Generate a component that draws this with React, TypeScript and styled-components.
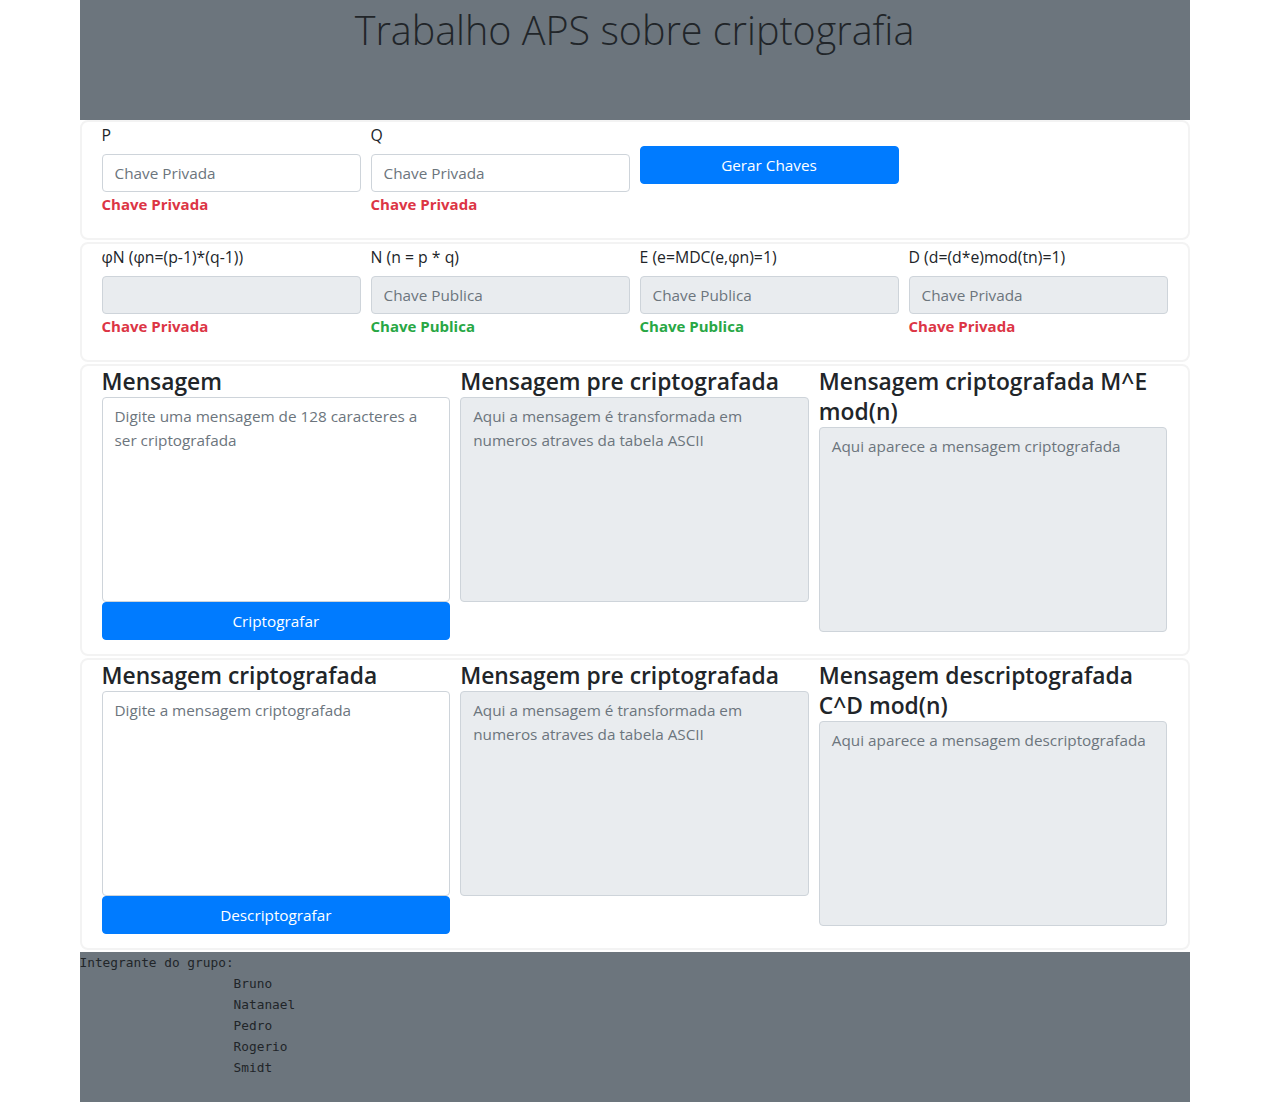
import React from "react";
import styled, { createGlobalStyle } from "styled-components";

const GlobalStyle = createGlobalStyle`
  html, body { margin: 0; padding: 0; background: #fff; }
  body {
    font-family: "Open Sans", "Noto Sans", Arial, sans-serif;
    font-size: 15.3px;
    line-height: 1.5;
    color: #212529;
  }
  * { box-sizing: border-box; }
`;

const Page = styled.div`
  width: 1110px;
  margin: 0 auto;
`;

const Header = styled.header`
  background: #6c757d;
  height: 120px;
  padding-top: 7px;
  text-align: center;
`;

const Title = styled.h1`
  margin: 0;
  font-size: 39.5px;
  font-weight: 300;
  line-height: 1.2;
  color: #212529;
`;

const Card = styled.section<{ $bottom?: number }>`
  border: 2px solid #f3f3f3;
  border-radius: 8px;
  padding: 1px 20px ${(p) => p.$bottom ?? 24}px;
  & + & { margin-top: 2px; }
`;

const Grid = styled.div<{ $cols: number }>`
  display: grid;
  grid-template-columns: repeat(${(p) => p.$cols}, 1fr);
  column-gap: 10px;
  align-items: start;
`;

const Field = styled.div`
  display: flex;
  flex-direction: column;
`;

const Label = styled.label`
  display: block;
  font-size: 15.8px;
  line-height: 24px;
  margin-bottom: 7px;
  white-space: nowrap;
`;

const Input = styled.input`
  display: block;
  width: 100%;
  height: 38px;
  padding: 6px 12px;
  font: inherit;
  color: #495057;
  background: ${(p) => (p.disabled ? "#e9ecef" : "#fff")};
  border: 1px solid #ced4da;
  border-radius: 4px;
  outline: none;
  &::placeholder { color: #6c757d; opacity: 1; }
`;

const Feedback = styled.div<{ $ok?: boolean }>`
  margin-top: 3px;
  padding-bottom: 1px;
  line-height: 18px;
  font-weight: 700;
  font-size: 15px;
  color: ${(p) => (p.$ok ? "#28a745" : "#dc3545")};
`;

const Button = styled.button<{ $top?: number }>`
  display: block;
  width: 100%;
  height: 38px;
  margin-top: ${(p) => p.$top ?? 0}px;
  padding: 6px 12px;
  font: inherit;
  color: #fff;
  background: #007bff;
  border: 1px solid #007bff;
  border-radius: 4px;
  cursor: pointer;
`;

const Heading = styled.h4`
  margin: 0;
  font-size: 22.8px;
  font-weight: 600;
  line-height: 30px;
  color: #212529;
`;

const TextArea = styled.textarea`
  display: block;
  width: 100%;
  height: 205px;
  padding: 6px 12px;
  font: inherit;
  line-height: 24px;
  color: #495057;
  background: ${(p) => (p.disabled ? "#e9ecef" : "#fff")};
  border: 1px solid #ced4da;
  border-radius: 4px;
  resize: none;
  outline: none;
  &::placeholder { color: #6c757d; opacity: 1; }
`;

const Footer = styled.pre`
  margin: 2px 0 0;
  background: #6c757d;
  color: #212529;
  font-family: "DejaVu Sans Mono", "Liberation Mono", monospace;
  font-size: 12.8px;
  line-height: 21px;
  padding-bottom: 24px;
`;

const Names = styled.div`
  padding-left: 20ch;
`;

type FieldDef = { label: string; placeholder: string; disabled?: boolean; note: string; ok?: boolean };

const KeyField: React.FC<FieldDef> = ({ label, placeholder, disabled, note, ok }) => (
  <Field>
    <Label>{label}</Label>
    <Input placeholder={placeholder} disabled={disabled} />
    <Feedback $ok={ok}>{note}</Feedback>
  </Field>
);

const derived: FieldDef[] = [
  { label: "φN (φn=(p-1)*(q-1))", placeholder: "", disabled: true, note: "Chave Privada" },
  { label: "N (n = p * q)", placeholder: "Chave Publica", disabled: true, note: "Chave Publica", ok: true },
  { label: "E (e=MDC(e,φn)=1)", placeholder: "Chave Publica", disabled: true, note: "Chave Publica", ok: true },
  { label: "D (d=(d*e)mod(tn)=1)", placeholder: "Chave Privada", disabled: true, note: "Chave Privada" },
];

type MsgProps = {
  inTitle: string;
  inPlaceholder: string;
  action: string;
  outTitle: string;
  outPlaceholder: string;
};

const MessageCard: React.FC<MsgProps> = ({ inTitle, inPlaceholder, action, outTitle, outPlaceholder }) => (
  <Card $bottom={14}>
    <Grid $cols={3}>
      <Field>
        <Heading>{inTitle}</Heading>
        <TextArea placeholder={inPlaceholder} />
        <Button>{action}</Button>
      </Field>
      <Field>
        <Heading>Mensagem pre criptografada</Heading>
        <TextArea disabled placeholder="Aqui a mensagem é transformada em numeros atraves da tabela ASCII" />
      </Field>
      <Field>
        <Heading>{outTitle}</Heading>
        <TextArea disabled placeholder={outPlaceholder} />
      </Field>
    </Grid>
  </Card>
);

export default function App() {
  return (
    <>
      <GlobalStyle />
      <Page>
        <Header>
          <Title>Trabalho APS sobre criptografia</Title>
        </Header>
        <Card>
          <Grid $cols={4}>
            <KeyField label="P" placeholder="Chave Privada" note="Chave Privada" />
            <KeyField label="Q" placeholder="Chave Privada" note="Chave Privada" />
            <Field>
              <Button $top={23}>Gerar Chaves</Button>
            </Field>
          </Grid>
        </Card>
        <Card>
          <Grid $cols={4}>
            {derived.map((f) => (
              <KeyField key={f.label} {...f} />
            ))}
          </Grid>
        </Card>
        <MessageCard
          inTitle="Mensagem"
          inPlaceholder="Digite uma mensagem de 128 caracteres a ser criptografada"
          action="Criptografar"
          outTitle="Mensagem criptografada M^E mod(n)"
          outPlaceholder="Aqui aparece a mensagem criptografada"
        />
        <MessageCard
          inTitle="Mensagem criptografada"
          inPlaceholder="Digite a mensagem criptografada"
          action="Descriptografar"
          outTitle={"Mensagem descriptografada C^D\u00a0mod(n)"}
          outPlaceholder="Aqui aparece a mensagem descriptografada"
        />
        <Footer>
          {"Integrante do grupo:"}
          <Names>
            {"Bruno\nNatanael\nPedro\nRogerio\nSmidt"}
          </Names>
        </Footer>
      </Page>
    </>
  );
}
